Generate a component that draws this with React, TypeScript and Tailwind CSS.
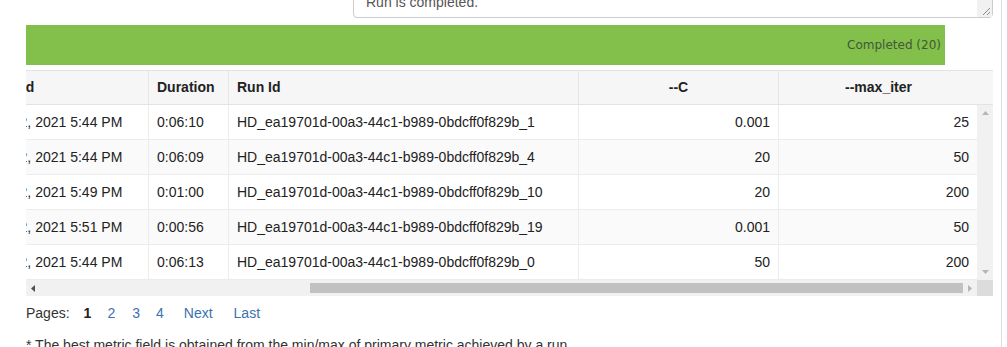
import React from "react";

const rows = [
  { date: "Jul 22, 2021 5:44 PM", dur: "0:06:10", id: "HD_ea19701d-00a3-44c1-b989-0bdcff0f829b_1", c: "0.001", it: "25" },
  { date: "Jul 22, 2021 5:44 PM", dur: "0:06:09", id: "HD_ea19701d-00a3-44c1-b989-0bdcff0f829b_4", c: "20", it: "50" },
  { date: "Jul 22, 2021 5:49 PM", dur: "0:01:00", id: "HD_ea19701d-00a3-44c1-b989-0bdcff0f829b_10", c: "20", it: "200" },
  { date: "Jul 22, 2021 5:51 PM", dur: "0:00:56", id: "HD_ea19701d-00a3-44c1-b989-0bdcff0f829b_19", c: "0.001", it: "50" },
  { date: "Jul 22, 2021 5:44 PM", dur: "0:06:13", id: "HD_ea19701d-00a3-44c1-b989-0bdcff0f829b_0", c: "50", it: "200" },
];

function Tri({ dir, color }: { dir: "up" | "down" | "left" | "right"; color: string }) {
  const pts: Record<string, string> = {
    up: "0,4 3.5,0 7,4",
    down: "0,0 7,0 3.5,4",
    left: "4,0 4,7 0,3.5",
    right: "0,0 0,7 4,3.5",
  };
  const w = dir === "up" || dir === "down" ? 7 : 4;
  const h = dir === "up" || dir === "down" ? 4 : 7;
  return (
    <svg width={w} height={h} viewBox={`0 0 ${w} ${h}`}>
      <polygon points={pts[dir]} fill={color} />
    </svg>
  );
}

export default function App() {
  return (
    <div className="w-[1007px] h-[347px] overflow-hidden bg-white flex font-['Liberation_Sans',Arial,sans-serif] text-[14px] text-[#222]">
      <div className="w-[1002px] h-full border-r border-[#dddddd] flex flex-col pl-[26px] shrink-0">
        {/* textarea remnant */}
        <div className="ml-[327px] w-[640px] h-[48px] -mt-[30px] shrink-0 border border-[#cccccc] rounded-[4px] flex bg-white">
          <div className="flex-1 pl-[12px] pt-[21px] leading-[20px] text-[#555555]">Run is completed.</div>
          <div className="w-[15px] bg-[#f1f1f1] flex flex-col justify-end">
            <svg width="15" height="15" viewBox="0 0 15 15">
              <line x1="13" y1="6" x2="6" y2="13" stroke="#8a8a8a" strokeWidth="1" />
              <line x1="13" y1="10" x2="10" y2="13" stroke="#8a8a8a" strokeWidth="1" />
            </svg>
          </div>
        </div>

        {/* green status bar */}
        <div className="mt-[7px] w-[919px] h-[40px] shrink-0 bg-[#82bf4b] flex items-center justify-end pr-[4px]">
          <span className="font-['DejaVu_Sans',sans-serif] text-[12px] text-[#44573a]">Completed (20)</span>
        </div>

        {/* table */}
        <div className="mt-[5px] w-[967px] shrink-0 flex flex-col">
          <div className="flex h-[210px]">
            <div className="w-[951px] overflow-hidden">
              <div className="flex flex-col w-[1000px]">
                <div className="flex h-[35px] bg-[#f6f6f6] border-t border-b border-[#e3e3e3] font-bold items-stretch">
                  <div className="w-[166px] -ml-[44px] pl-[4px] flex items-center">Started</div>
                  <div className="w-[80px] border-l border-[#e6e6e6] pl-[8px] flex items-center">Duration</div>
                  <div className="w-[350px] border-l border-[#e6e6e6] pl-[8px] flex items-center">Run Id</div>
                  <div className="w-[200px] border-l border-[#e6e6e6] flex items-center justify-center">--C</div>
                  <div className="w-[200px] border-l border-[#e6e6e6] flex items-center justify-center">--max_iter</div>
                </div>
                {rows.map((r, i) => (
                  <div
                    key={i}
                    className={`flex h-[35px] border-b border-[#ececec] items-stretch ${i % 2 === 1 ? "bg-[#fafafa]" : "bg-white"}`}
                  >
                    <div className="w-[166px] -ml-[44px] pl-[8px] flex items-center whitespace-nowrap">{r.date}</div>
                    <div className="w-[80px] border-l border-[#ececec] pl-[8px] flex items-center">{r.dur}</div>
                    <div className="w-[350px] border-l border-[#ececec] pl-[8px] flex items-center whitespace-nowrap">{r.id}</div>
                    <div className="w-[200px] border-l border-[#ececec] pr-[8px] flex items-center justify-end">{r.c}</div>
                    <div className="w-[200px] border-l border-[#ececec] pr-[9px] flex items-center justify-end">{r.it}</div>
                  </div>
                ))}
              </div>
            </div>
            <div className="w-[16px] flex flex-col">
              <div className="h-[35px] bg-[#f6f6f6] border-t border-b border-[#e3e3e3]"></div>
              <div className="flex-1 bg-[#f1f1f1] flex flex-col items-center justify-between py-[6px]">
                <Tri dir="up" color="#b5b5b5" />
                <Tri dir="down" color="#b5b5b5" />
              </div>
            </div>
          </div>
          <div className="flex h-[16px]">
            <div className="w-[951px] bg-[#f1f1f1] flex items-center">
              <div className="w-[14px] flex justify-center">
                <Tri dir="left" color="#505050" />
              </div>
              <div className="flex-1 relative h-full">
                <div className="absolute left-[270px] right-0 top-[3px] h-[10px] bg-[#c1c1c1]"></div>
              </div>
              <div className="w-[14px] flex justify-center">
                <Tri dir="right" color="#b5b5b5" />
              </div>
            </div>
            <div className="w-[16px] bg-[#dcdcdc]"></div>
          </div>
        </div>

        {/* pagination */}
        <div className="mt-[7px] flex leading-[20px] text-[#333333]">
          <span>Pages:</span>
          <span className="ml-[14px] font-bold text-[#222]">1</span>
          <span className="ml-[16px] text-[#3a72b0]">2</span>
          <span className="ml-[17px] text-[#3a72b0]">3</span>
          <span className="ml-[16px] text-[#3a72b0]">4</span>
          <span className="ml-[20px] text-[#3a72b0]">Next</span>
          <span className="ml-[21px] text-[#3a72b0]">Last</span>
        </div>

        {/* footnote */}
        <div className="mt-[12px] leading-[20px] text-[#333333] whitespace-nowrap">
          * The best metric field is obtained from the min/max of primary metric achieved by a run.
        </div>
      </div>
    </div>
  );
}
